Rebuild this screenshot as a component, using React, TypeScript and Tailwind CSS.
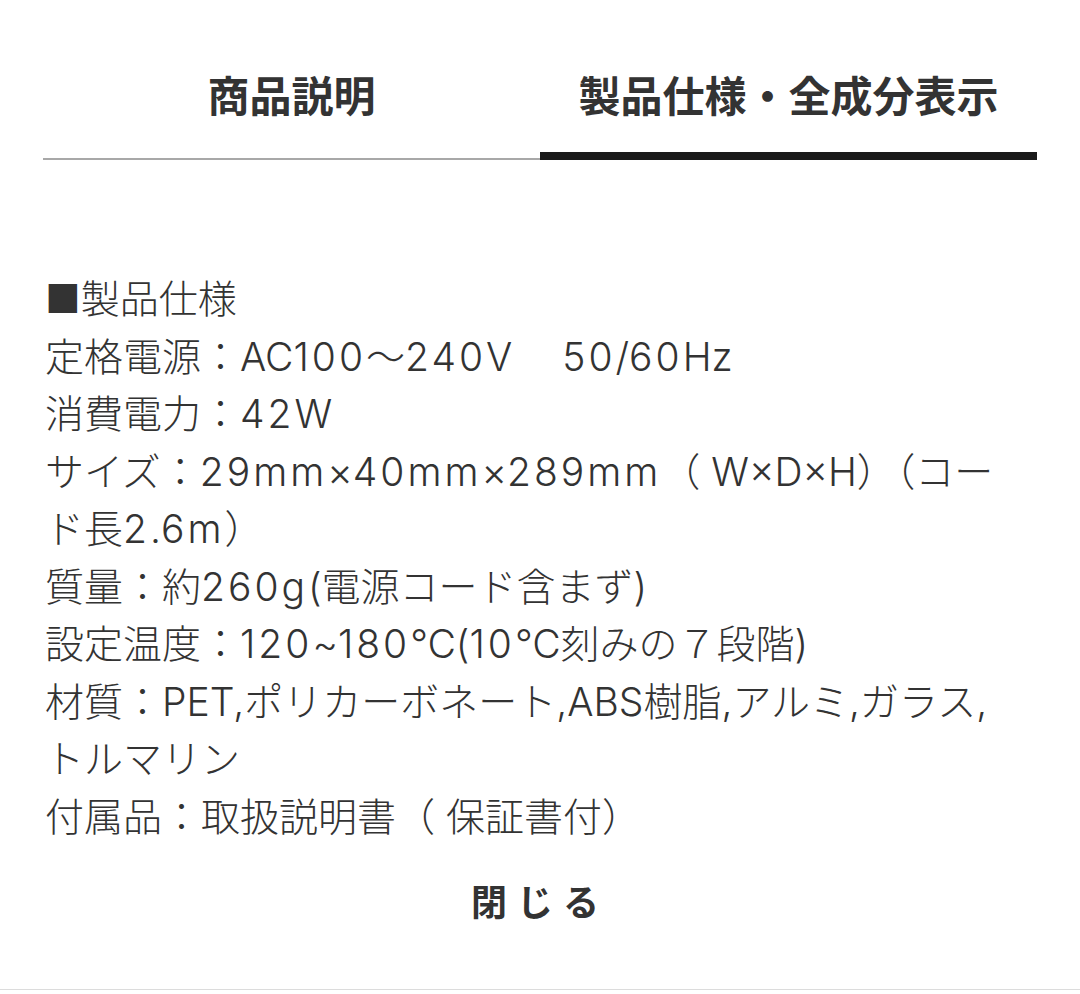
const LINES = [
  "■製品仕様",
  "定格電源：AC100〜240V\u3000 50/60Hz",
  "消費電力：42W",
  "サイズ：29mm×40mm×289mm（ W×D×H）（コー",
  "ド長2.6m）",
  "質量：約260g(電源コード含まず)",
  "設定温度：120~180℃(10℃刻みの７段階)",
  "材質：PET,ポリカーボネート,ABS樹脂,アルミ,ガラス,",
  "トルマリン",
  "付属品：取扱説明書（ 保証書付）",
];

// digits and lowercase latin are a little wider in the original font
function SpecLine({ text }: { text: string }) {
  const parts = text.split(/([0-9a-z]+)/);
  return (
    <div className="whitespace-pre">
      {parts.map((p, i) =>
        i % 2 === 1 ? (
          <span key={i} className="tracking-[3px]">
            {p}
          </span>
        ) : (
          <span key={i}>{p}</span>
        )
      )}
    </div>
  );
}

export default function App() {
  return (
    <div
      className="w-[1080px] h-[994px] bg-white text-[#333] overflow-hidden"
      style={{ fontFamily: '"Noto Sans CJK JP", sans-serif' }}
    >
      <div className="px-[43px]">
        {/* tabs */}
        <div className="flex">
          <div className="flex-1 h-[160px] flex items-center justify-center pt-[29px] border-b-2 border-[#a8a8a8]">
            <span className="text-[42px] font-bold leading-none">商品説明</span>
          </div>
          <div className="flex-1 h-[160px] flex items-center justify-center pt-[35px] border-b-8 border-[#1a1a1a]">
            <span className="text-[42px] font-bold leading-none">製品仕様・全成分表示</span>
          </div>
        </div>

        {/* spec text */}
        <div
          className="mt-[110px] pl-[2px] text-[39px] leading-[57.5px] font-light"
          style={{ fontFamily: 'Inter, "Noto Sans CJK JP", sans-serif' }}
        >
          {LINES.map((l, i) => (
            <SpecLine key={i} text={l} />
          ))}
        </div>
      </div>

      <div className="h-[145px] pt-[31px] flex justify-center border-b border-[#dcdcdc]">
        <button className="h-[48px] text-[36px] font-bold leading-[48px] tracking-[10px] text-[#333]">
          閉じる
        </button>
      </div>
    </div>
  );
}
